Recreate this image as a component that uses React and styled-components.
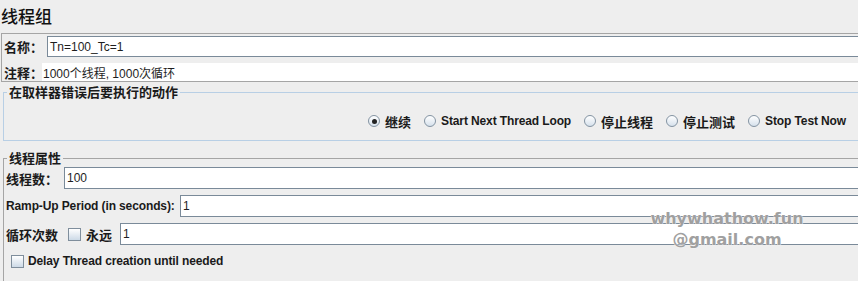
import React from 'react';
import styled, { createGlobalStyle } from 'styled-components';

const GlobalStyle = createGlobalStyle`
  html, body {
    margin: 0;
    padding: 0;
    background: #eeeeee;
    overflow: hidden;
  }
  body {
    font-family: "Liberation Sans", "Noto Sans CJK SC", sans-serif;
  }
`;

const Page = styled.div`
  position: relative;
  width: 870px;
  height: 281px;
  background: #eeeeee;
  color: #1e1e1e;
`;

const Title = styled.div`
  height: 33px;
  line-height: 32px;
  padding-left: 1px;
  font-family: "Noto Sans CJK SC", sans-serif;
  font-size: 17px;
  font-weight: 500;
  color: #111;
`;

const NamePanel = styled.div`
  margin-left: 1px;
  border-top: 1px solid #a5a5a5;
  border-left: 1px solid #a5a5a5;
  border-bottom: 1px solid #a5a5a5;
  padding: 1px 0 0 2px;
  display: flex;
  flex-direction: column;
  gap: 6px;
`;

const Row = styled.div`
  display: flex;
  align-items: center;
  height: ${(p) => p.$h || 22}px;
`;

const Label = styled.span`
  flex: none;
  width: ${(p) => p.$w}px;
  font-family: ${(p) =>
    p.$latin ? '"Liberation Sans", sans-serif' : '"Noto Sans CJK SC", sans-serif'};
  font-size: ${(p) => (p.$latin ? 12 : 13)}px;
  letter-spacing: ${(p) => (p.$latin ? '-0.12px' : '0')};
  font-weight: bold;
  white-space: nowrap;
  color: #1a1a1a;
`;

const Field = styled.div`
  flex: 1;
  align-self: stretch;
  box-sizing: border-box;
  background: #ffffff;
  border: 1px solid #7a8a99;
  padding-left: 2px;
  display: flex;
  align-items: center;
  font-size: 12px;
  color: #1e1e1e;
`;

const Note = styled.div`
  flex: 1;
  align-self: stretch;
  background: #ffffff;
  padding-left: 1px;
  display: flex;
  align-items: center;
  font-family: "Liberation Sans", "Noto Sans CJK SC", sans-serif;
  font-size: 12px;
  color: #1e1e1e;
`;

const Group = styled.fieldset`
  margin: ${(p) => p.$top || 0}px 0 0 3px;
  padding: ${(p) => p.$pad};
  border: 1px solid ${(p) => (p.$blue ? '#b8cfe5' : '#a5a5a5')};
  border-right: none;
  ${(p) => (p.$open ? 'border-bottom: none;' : '')}
  min-inline-size: 0;
`;

const Legend = styled.legend`
  margin-left: 1px;
  padding: 0 2px;
  height: 18px;
  line-height: 18px;
  font-family: "Noto Sans CJK SC", sans-serif;
  font-size: 13px;
  font-weight: bold;
  color: #1a1a1a;
`;

const RadioRow = styled.div`
  display: flex;
  justify-content: flex-end;
  align-items: center;
  gap: 13px;
  height: 20px;
  padding-right: 24px;
`;

const Choice = styled.label`
  display: flex;
  align-items: center;
  gap: 5px;
`;

const Radio = styled.span`
  position: relative;
  width: 12px;
  height: 12px;
  box-sizing: border-box;
  border-radius: 50%;
  border: 1px solid #8393a2;
  background: linear-gradient(#ffffff, #d6e1ec);
  &::after {
    content: '';
    display: ${(p) => (p.$on ? 'block' : 'none')};
    position: absolute;
    left: 2.5px;
    top: 2.5px;
    width: 5px;
    height: 5px;
    border-radius: 50%;
    background: #222;
  }
`;

const Box = styled.span`
  flex: none;
  width: 13px;
  height: 13px;
  box-sizing: border-box;
  border: 1px solid #7f8e9c;
  background: linear-gradient(#ffffff, #cddae7);
`;

const Rows = styled.div`
  display: flex;
  flex-direction: column;
  gap: 6px;
`;

const CheckRow = styled.div`
  display: flex;
  align-items: center;
  gap: 4px;
  height: 20px;
  margin-top: 6px;
  padding-left: 5px;
`;

const Mark = styled.div`
  position: absolute;
  left: 630px;
  top: 208px;
  width: 194px;
  text-align: center;
  font-family: "DejaVu Sans", sans-serif;
  font-weight: bold;
  font-size: 16px;
  line-height: 21px;
  color: #a0a0a0;
  text-shadow: 0 0 1px #ffffff, 0 0 1px #ffffff;
  pointer-events: none;
`;

const actions = [
  { text: '继续', on: true },
  { text: 'Start Next Thread Loop', latin: true },
  { text: '停止线程' },
  { text: '停止测试' },
  { text: 'Stop Test Now', latin: true },
];

export default function App() {
  return (
    <Page>
      <GlobalStyle />
      <Title>线程组</Title>

      <NamePanel>
        <Row $h={21} style={{ marginTop: 1 }}>
          <Label $w={43}>名称：</Label>
          <Field>Tn=100_Tc=1</Field>
        </Row>
        <Row $h={18}>
          <Label $w={38}>注释：</Label>
          <Note>1000个线程, 1000次循环</Note>
        </Row>
      </NamePanel>

      <Group $blue $top={1} $pad="10px 0 9px 2px">
        <Legend>在取样器错误后要执行的动作</Legend>
        <RadioRow>
          {actions.map((a) => (
            <Choice key={a.text}>
              <Radio $on={a.on} />
              <Label $latin={a.latin}>{a.text}</Label>
            </Choice>
          ))}
        </RadioRow>
      </Group>

      <Group $top={8} $open $pad="0 0 20px 2px">
        <Legend>线程属性</Legend>
        <Rows>
          <Row>
            <Label $w={58}>线程数：</Label>
            <Field>100</Field>
          </Row>
          <Row>
            <Label $latin $w={174}>Ramp-Up Period (in seconds):</Label>
            <Field>1</Field>
          </Row>
          <Row>
            <Label $w={62}>循环次数</Label>
            <Box />
            <Label $w={34} style={{ paddingLeft: 5 }}>永远</Label>
            <Field>1</Field>
          </Row>
        </Rows>
        <CheckRow>
          <Box />
          <Label $latin>Delay Thread creation until needed</Label>
        </CheckRow>
      </Group>

      <Mark>
        whywhathow.fun
        <br />
        @gmail.com
      </Mark>
    </Page>
  );
}
